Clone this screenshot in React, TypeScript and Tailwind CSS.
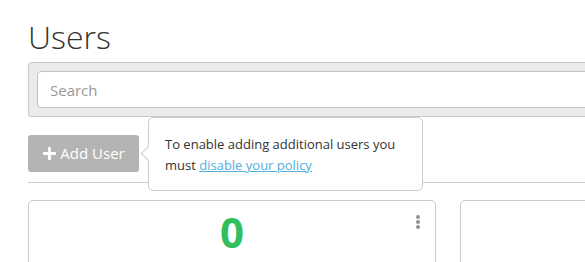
import React from "react";
import { FaPlus } from "react-icons/fa";

const font = { fontFamily: '"Open Sans", "Liberation Sans", sans-serif' };

const StatCard: React.FC<{ value?: string }> = ({ value }) => (
  <div className="relative w-[408px] h-[120px] shrink-0 rounded-[5px] border border-[#cccccc] bg-white pt-[10px]">
    {value !== undefined && (
      <>
        <div className="text-center text-[42px] leading-[42px] font-bold text-[#2fbf5f]">
          {value}
        </div>
        <div className="absolute right-[15px] top-[14px] flex flex-col gap-[1px]">
          <span className="block w-[4px] h-[4px] rounded-full bg-[#8d9199]" />
          <span className="block w-[4px] h-[4px] rounded-full bg-[#8d9199]" />
          <span className="block w-[4px] h-[4px] rounded-full bg-[#8d9199]" />
        </div>
      </>
    )}
  </div>
);

const App: React.FC = () => {
  return (
    <div className="w-[585px] h-[262px] overflow-hidden bg-white" style={font}>
      <div className="w-[900px] pl-[28px] pt-[19px]">
        <h1 className="text-[32px] leading-[36px] font-light text-[#333333] mb-[7px]">
          Users
        </h1>

        {/* Search panel */}
        <div className="rounded-[3px] border border-[#c8c8c8] bg-[#ebebeb] p-[8px]">
          <input
            type="text"
            placeholder="Search"
            className="w-full h-[37px] rounded-[4px] border border-[#c2c2c2] bg-white px-[12px] text-[15px] text-[#333] placeholder:text-[#999999] outline-none"
          />
        </div>

        {/* Toolbar */}
        <div className="relative h-[66px] border-b border-[#cccccc] pt-[18px]">
          <button className="flex items-center gap-[3px] h-[37px] w-[111px] justify-center rounded-[3px] bg-[#b4b4b4] text-[15px] text-white">
            <FaPlus className="w-[15px] h-[15px]" />
            <span>Add User</span>
          </button>

          <div className="absolute left-[120px] top-0 w-[275px] h-[74px] rounded-[5px] border border-[#cccccc] bg-white px-[16px] pt-[16px] pb-[14px] text-[13px] leading-[21px] text-[#333333] z-10">
            <span className="absolute left-[-6px] top-[30px] block w-[11px] h-[11px] rotate-45 border-l border-b border-[#cccccc] bg-white" />
            <p className="relative">
              To enable adding additional users you must{" "}
              <a href="#" className="text-[#4fadde] underline">
                disable your policy
              </a>
            </p>
          </div>
        </div>

        {/* Cards */}
        <div className="flex gap-[24px] mt-[17px]">
          <StatCard value="0" />
          <StatCard />
        </div>
      </div>
    </div>
  );
};

export default App;
